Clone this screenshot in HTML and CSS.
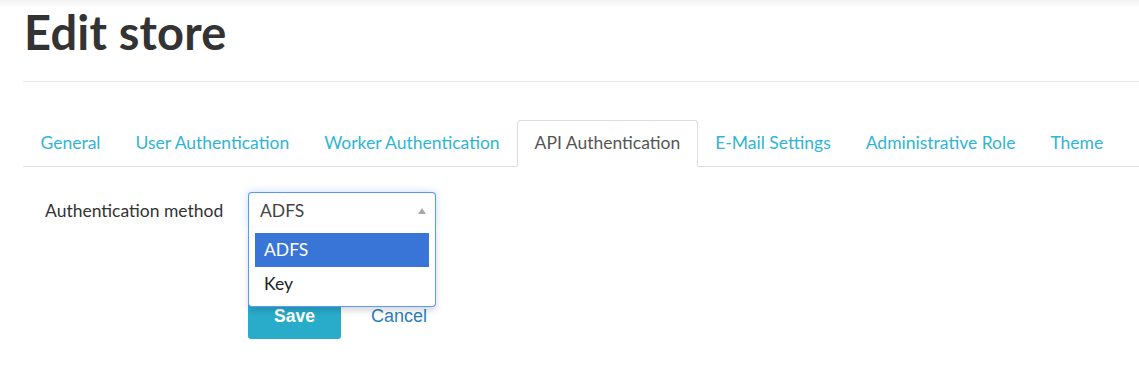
FILE: index.html
```html
<!DOCTYPE html>
<html lang="en">
<head>
  <meta charset="UTF-8">
  <title>Edit store</title>
  <link rel="stylesheet" href="styles.css">
</head>
<body>
  <div class="top-shade"></div>

  <div class="page">
    <h1 class="page-title">Edit store</h1>

    <ul class="nav-tabs">
      <li><a href="#">General</a></li>
      <li><a href="#">User Authentication</a></li>
      <li><a href="#">Worker Authentication</a></li>
      <li class="active"><a href="#">API Authentication</a></li>
      <li><a href="#">E-Mail Settings</a></li>
      <li><a href="#">Administrative Role</a></li>
      <li><a href="#">Theme</a></li>
    </ul>

    <form class="store-form">
      <div class="form-row">
        <label class="form-label">Authentication method</label>
        <div class="chosen">
          <div class="chosen-single">
            <span>ADFS</span>
            <i class="caret-up"></i>
          </div>
          <ul class="chosen-drop">
            <li class="highlighted">ADFS</li>
            <li>Key</li>
          </ul>
        </div>
      </div>

      <div class="form-actions">
        <button type="button" class="btn-save">Save</button>
        <a href="#" class="cancel">Cancel</a>
      </div>
    </form>
  </div>
</body>
</html>
```

FILE: styles.css
```css
* { box-sizing: border-box; }

body {
  margin: 0;
  font-family: 'Lato', sans-serif;
  color: #555;
  background: #fff;
}

.top-shade {
  height: 8px;
  background: linear-gradient(#f2f2f2, #fff);
}

.page {
  padding-left: 23px;
}

.page-title {
  margin: 0;
  padding-left: 1px;
  font-size: 47px;
  font-weight: 700;
  line-height: 48px;
  color: #333;
  letter-spacing: 0.2px;
  height: 74px;
  border-bottom: 1px solid #eaeaea;
}

.nav-tabs {
  list-style: none;
  margin: 38px 0 0;
  padding: 0;
  display: flex;
  border-bottom: 1px solid #ddd;
}

.nav-tabs li {
  margin-bottom: -1px;
}

.nav-tabs a {
  display: block;
  padding: 10px 16.5px 11px;
  font-size: 17.5px;
  line-height: 24px;
  color: #2fb4d8;
  text-decoration: none;
  border: 1px solid transparent;
  border-radius: 4px 4px 0 0;
}

.nav-tabs .active a {
  color: #555;
  background: #fff;
  border-color: #ddd #ddd transparent;
}

.store-form {
  padding-top: 25px;
}

.form-row {
  display: flex;
  align-items: center;
  height: 36px;
}

.form-label {
  width: 225px;
  padding-left: 22px;
  font-size: 17.5px;
  color: #333;
}

.chosen {
  position: relative;
  width: 188px;
}

.chosen-single {
  height: 36px;
  display: flex;
  align-items: center;
  justify-content: space-between;
  padding: 0 9px 0 11px;
  border: 1px solid #5897fb;
  border-bottom: none;
  border-radius: 4px 4px 0 0;
  background: #fff;
  box-shadow: 0 0 8px rgba(88, 151, 251, 0.35);
  font-size: 17.5px;
  color: #444;
}

.caret-up {
  width: 0;
  height: 0;
  border-left: 4px solid transparent;
  border-right: 4px solid transparent;
  border-bottom: 6px solid #aaa;
}

.chosen-drop {
  position: absolute;
  top: 35px;
  left: 0;
  right: 0;
  margin: 0;
  padding: 6px 6px 5px;
  list-style: none;
  background: #fff;
  border: 1px solid #5897fb;
  border-top: none;
  border-radius: 0 0 4px 4px;
  box-shadow: 0 4px 6px rgba(0, 0, 0, 0.15);
  z-index: 10;
}

.chosen-drop li {
  height: 34px;
  line-height: 34px;
  padding-left: 9px;
  font-size: 17.5px;
  color: #222;
}

.chosen-drop li.highlighted {
  background: #3875d7;
  color: #fff;
}

.form-actions {
  display: flex;
  align-items: center;
  gap: 30px;
  margin-top: 65px;
  padding-left: 225px;
}

.btn-save {
  width: 93px;
  height: 46px;
  border: none;
  border-radius: 3px;
  background: #29acca;
  color: #fff;
  font-family: 'Liberation Sans', Arial, sans-serif;
  font-weight: bold;
  font-size: 17.5px;
  padding: 0;
}

.cancel {
  font-family: 'Liberation Sans', Arial, sans-serif;
  font-size: 18px;
  color: #2a7ebd;
  text-decoration: none;
}
```
